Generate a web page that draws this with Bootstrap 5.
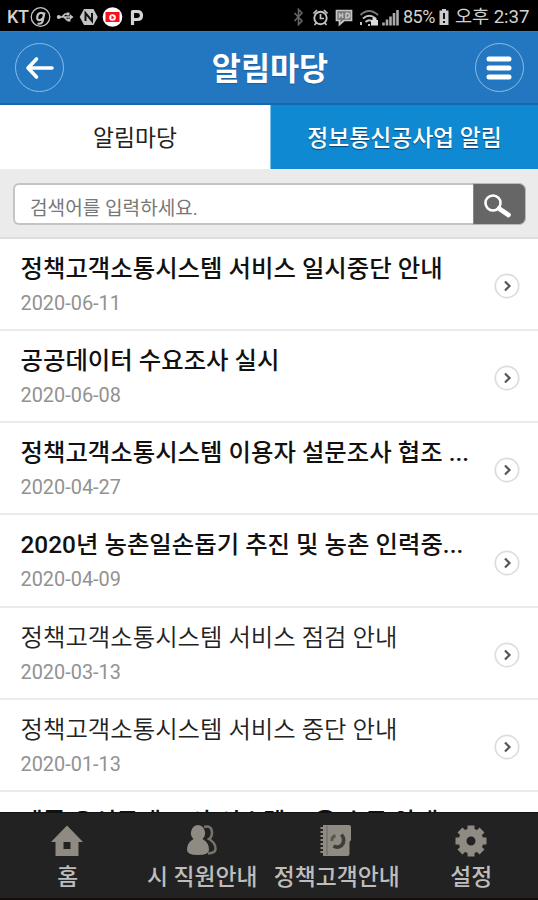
<!DOCTYPE html>
<html lang="ko">
<head>
<meta charset="utf-8">
<meta name="viewport" content="width=device-width, initial-scale=1">
<title>알림마당</title>
<link href="https://cdn.jsdelivr.net/npm/bootstrap@5.3.0/dist/css/bootstrap.min.css" rel="stylesheet">
<style>
body{font-family:Roboto,"Noto Sans CJK KR",sans-serif;height:900px;overflow:hidden;background:#fff;color:#111;line-height:1}
svg{display:block;flex:none}
.statusbar{height:31px;background:#000;color:#d2d2d2;font-size:18.7px;padding:2px 8px 0 7px}
.carrier{font-size:18px;width:23px;font-weight:500;letter-spacing:-.3px}
.batt-text{font-size:18px;width:34px;letter-spacing:-.5px}
.clock{white-space:nowrap;width:75px;letter-spacing:-.1px;padding-top:2px}
.titlebar{height:74px;background:#2277c0;border-top:1px solid #2b82ca;border-bottom:2px solid #1767b0;padding:0 14px 0 15px}
.titlebar h1{font-size:31.6px;font-weight:700;text-shadow:0 1px 1px #1a5f9e;padding:4px 0 0 1px}
.round{width:49px;height:49px;border:1.5px solid #8dbce3;background:none;padding:0}
.tabs{height:64px;font-size:22.8px}
.tabs a{padding-top:5px}
.tab-on{width:270px;background:#fff;color:#222}
.tab-off{background:#0f8ad2;border-left:1px solid #7fc2ee;text-shadow:0 1px 1px #06447a;font-weight:500}
.searchbar{height:69.500px;background:#ebebeb;border-bottom:2px solid #dedede;padding:14px 12px 13px 13px}
.field{height:42px;border:2px solid #c4c4c4;border-right:0;border-radius:6px 0 0 6px;font-size:19.1px;color:#777;padding:9px 0 0 15px}
.go{width:53px;height:42px;background:#666;border:1px solid #b9b9b9;border-left:1px solid #888;border-radius:0 7px 7px 0;padding:3px 0 0 8px}
.notices{height:573.500px}
.notice{height:92.300px;flex:none;border-bottom:2px solid #ebebeb;padding:0 18px 0 20.500px}
.subject{font-size:24.4px;line-height:30px;font-weight:500;white-space:nowrap;margin-top:15px;color:#111}
.read .subject{font-weight:350;color:#222}
.when{font-size:19.9px;line-height:24px;margin-top:8px;color:#929292}
.peek{margin-top:15px}
.bottomnav{height:88px;background:#222;border-top:1px solid #111;border-bottom:2px solid #120e0e;color:#bdbdbd;font-size:22.8px;font-weight:500;line-height:30px}
.bottomnav a{color:inherit;white-space:nowrap;width:134.6px;padding-top:11px}
.bottomnav span{margin-top:5px;padding-left:1px}
</style>
<script src="https://cdn.jsdelivr.net/npm/bootstrap@5.3.0/dist/js/bootstrap.bundle.min.js"></script>
</head>
<body class="d-flex flex-column">
<div class="statusbar d-flex align-items-center flex-shrink-0">
  <span class="carrier">KT</span>
  <svg width="118" height="24" viewBox="30 4 118 24" fill="none" stroke="#c4c4c4">
    <circle cx="40.500" cy="16" r="9.300" stroke-width="1.300"/>
    <path d="M44.500 11.500l-2 9q-1 3-5 2M43.800 13.500q-1-2-3.600-1.500t-3 4 2.800 3 3.500-3" stroke-width="2.200"/>
    <path d="M58 16h14M62 16l3-3h2.500M64 16l3 3h2" stroke-width="1.700"/><circle cx="58.800" cy="16" r="2" fill="#c4c4c4" stroke="none"/><path d="M70 13.300l3.500 2.700-3.500 2.700zM66.500 11.500h3v3h-3zM67.500 17.500h3v3h-3z" fill="#c4c4c4" stroke="none"/>
    <path d="M84 8h9.500l4.300 8-4.300 8H84l-4.300-8z" fill="#c4c4c4" stroke="none"/><path d="M85.500 20v-8l6.500 8v-8" stroke="#111" stroke-width="2"/>
    <circle cx="112.500" cy="16" r="9.800" fill="#fff" stroke="none"/><path d="M105.500 11h14v10h-14z" fill="#f4121c" stroke="none"/><circle cx="112.500" cy="16.500" r="3.300" fill="#fff" stroke="none"/><path d="M111.500 14.500l3 2-3 2z" fill="#f4121c" stroke="none"/>
    <path d="M132.500 24V10.500h5q4 0 4 4t-4 4h-4" stroke="#d4d4d4" stroke-width="3.200" stroke-linejoin="round"/>
  </svg>
  <svg class="ms-auto me-1" width="109" height="24" viewBox="289 4 109 24" fill="none" stroke="#c4c4c4">
    <path d="M293.500 12l7.500 8-3.500 3.500v-15L301 12l-7.500 8" stroke="#666" stroke-width="1.600"/>
    <circle cx="319.500" cy="17" r="6.200" stroke-width="1.900"/><path d="M319.500 13v4.500h3.500M312.500 12.500l3.500-3.500M326.500 12.500l-3.500-3.500M315.500 21.500l-2 2.500M323.500 21.500l2 2.500" stroke-width="1.700"/>
    <path d="M335.500 9.500h15v10H343l-4.500 4v-4h-3z" stroke-width="1.700" fill="#777"/><path d="M338.500 12v5M341.500 12v5M338.500 14.500h3M345 12v5q3.500 0 3.500-2.500t-3.500-2.500" stroke-width="1.500"/>
    <path d="M359.500 14q8.500-8 17.500 0" stroke="#777" stroke-width="2"/><path d="M362 17.500q6.500-5.500 12.500 0M364.500 21q4-3.500 7 0" stroke-width="2"/><path d="M360 21v3M367 24h2" stroke-width="2"/><path d="M370 19h7v5.500h-7zM371.500 19v-2h4v2" fill="#ddd" stroke="none"/>
    <path d="M382.500 24.500v-3M386 24.500v-6M389.500 24.500v-9M393 24.500V12M396.500 24.500V9" stroke="#aaa" stroke-width="2.600"/>
  </svg>
  <span class="batt-text">85%</span>
  <svg class="me-1" width="14" height="20" viewBox="0 0 14 20"><path d="M5 2h4v1.500h2.500V18h-9V3.500H5z" fill="#ccc"/><path d="M7 6v6M7 14v2" stroke="#111" stroke-width="2"/></svg>
  <span class="clock">오후 2:37</span>
</div>
<header class="titlebar d-flex align-items-center justify-content-between flex-shrink-0 text-white">
  <button class="round rounded-circle d-flex align-items-center justify-content-center" aria-label="뒤로"><svg width="30" height="24" viewBox="0 0 30 24" fill="none" stroke="#fff" stroke-width="3.600" stroke-linecap="round" stroke-linejoin="round"><path d="M11.500 3L3 12l8.500 9M3.500 12H27"/></svg></button>
  <h1 class="m-0">알림마당</h1>
  <button class="round rounded-circle d-flex align-items-center justify-content-center" aria-label="메뉴"><svg width="26" height="26" viewBox="0 0 26 26" stroke="#fff" stroke-width="5" stroke-linecap="round"><path d="M3 4h20M3 13h20M3 22h20"/></svg></button>
</header>
<nav class="tabs d-flex flex-shrink-0">
  <a class="tab-on d-flex align-items-center justify-content-center text-decoration-none" href="#">알림마당</a>
  <a class="tab-off d-flex align-items-center justify-content-center flex-grow-1 text-white text-decoration-none" href="#">정보통신공사업 알림</a>
</nav>
<div class="searchbar d-flex flex-shrink-0">
  <div class="field bg-white flex-grow-1 d-flex align-items-center">검색어를 입력하세요.</div>
  <button class="go d-flex align-items-center" aria-label="검색"><svg width="32" height="28" viewBox="0 0 32 28" fill="none" stroke="#fff"><circle cx="11" cy="11" r="7.500" stroke-width="2.600"/><path d="M17 16.500L26.500 23" stroke-width="4.600" stroke-linecap="round"/></svg></button>
</div>
<main class="notices d-flex flex-column overflow-hidden flex-shrink-0">
  <a class="notice d-flex justify-content-between text-decoration-none" href="#"><div><div class="subject">정책고객소통시스템 서비스 일시중단 안내</div><div class="when">2020-06-11</div></div><svg class="align-self-center mt-1" width="26" height="26"><use href="#go"/></svg></a>
  <a class="notice d-flex justify-content-between text-decoration-none" href="#"><div><div class="subject">공공데이터 수요조사 실시</div><div class="when">2020-06-08</div></div><svg class="align-self-center mt-1" width="26" height="26"><use href="#go"/></svg></a>
  <a class="notice d-flex justify-content-between text-decoration-none" href="#"><div><div class="subject">정책고객소통시스템 이용자 설문조사 협조 ...</div><div class="when">2020-04-27</div></div><svg class="align-self-center mt-1" width="26" height="26"><use href="#go"/></svg></a>
  <a class="notice d-flex justify-content-between text-decoration-none" href="#"><div><div class="subject">2020년 농촌일손돕기 추진 및 농촌 인력중...</div><div class="when">2020-04-09</div></div><svg class="align-self-center mt-1" width="26" height="26"><use href="#go"/></svg></a>
  <a class="notice read d-flex justify-content-between text-decoration-none" href="#"><div><div class="subject">정책고객소통시스템 서비스 점검 안내</div><div class="when">2020-03-13</div></div><svg class="align-self-center mt-1" width="26" height="26"><use href="#go"/></svg></a>
  <a class="notice read d-flex justify-content-between text-decoration-none" href="#"><div><div class="subject">정책고객소통시스템 서비스 중단 안내</div><div class="when">2020-01-13</div></div><svg class="align-self-center mt-1" width="26" height="26"><use href="#go"/></svg></a>
  <a class="notice d-flex text-decoration-none" href="#"><div class="subject peek">제품 우선구매 조사 시스템 교육 수료 안내</div></a>
</main>
<footer class="bottomnav d-flex flex-shrink-0 text-center">
  <a class="d-flex flex-column align-items-center text-decoration-none" href="#"><svg width="34" height="34" viewBox="0 0 34 34"><path d="M17 1.500L33 18h-4.500v14h-23V18H1zM13.500 18v7h7v-7z" fill="#8f8a82" fill-rule="evenodd"/></svg><span>홈</span></a>
  <a class="d-flex flex-column align-items-center text-decoration-none" href="#"><svg width="34" height="34" viewBox="0 0 34 34"><path d="M19 3q8-2 8 6 0 4-3 6 7 4 6.500 10.500-.5 3.500-7.500 4" fill="none" stroke="#77736c" stroke-width="2.500"/><path d="M13 1a7.500 8 0 0 1 4.500 14Q24 18.500 24 26q0 5-11 5T2 26q0-7.500 6.500-11A7.500 8 0 0 1 13 1z" fill="#8f8a82"/></svg><span>시 직원안내</span></a>
  <a class="d-flex flex-column align-items-center text-decoration-none" href="#"><svg width="34" height="34" viewBox="0 0 34 34"><path d="M4 1h26q2 0 2 2v13l-1.500 2v12q0 2-2 2H4z" fill="#8f8a82"/><path d="M3 3v28" stroke="#8f8a82" stroke-width="3" stroke-dasharray="2 2"/><path d="M8 2v29" stroke="#6b6761"/><path d="M22.500 10.500q4.500 6 0 11-4 3-8 .5" stroke="#403d39" stroke-width="3.600" fill="none"/><path d="M13 17q-.5-4 3.500-5.500" stroke="#5a5650" stroke-width="3" fill="none"/></svg><span>정책고객안내</span></a>
  <a class="d-flex flex-column align-items-center text-decoration-none" href="#"><svg width="34" height="34" viewBox="0 0 34 34"><circle cx="17" cy="17" r="8.500" fill="none" stroke="#8f8a82" stroke-width="8"/><g stroke="#8f8a82" stroke-width="7"><path d="M17 1.500v5M17 27.500v5M1.500 17h5M27.500 17h5M6 6l4 4M24 24l4 4M28 6l-4 4M10 24l-4 4"/></g></svg><span>설정</span></a>
</footer>
<svg class="d-none"><symbol id="go" viewBox="0 0 26 26"><circle cx="13" cy="13" r="11.700" fill="#fff" stroke="#ddd" stroke-width="1.700"/><path d="M11 8.500l4.500 4.500-4.500 4.500" fill="none" stroke="#555" stroke-width="2.200"/></symbol></svg>
</body>
</html>
